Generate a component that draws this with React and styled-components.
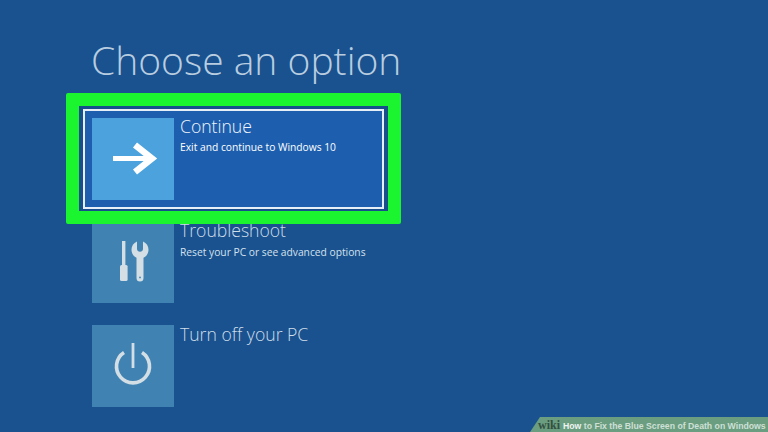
import React from "react";
import styled, { createGlobalStyle } from "styled-components";

const GlobalStyle = createGlobalStyle`
  html, body {
    margin: 0;
    padding: 0;
    width: 768px;
    height: 432px;
    overflow: hidden;
    background: #19528f;
  }
`;

const Page = styled.div`
  position: relative;
  box-sizing: border-box;
  width: 768px;
  height: 432px;
  padding: 35px 0 0 92px;
  overflow: hidden;
  background: #19528f;
  font-family: "Open Sans", "Liberation Sans", sans-serif;
`;

const Title = styled.h1`
  margin: 0 0 0 -1px;
  height: 83px;
  font-size: 39px;
  line-height: 50px;
  font-weight: 300;
  color: #b9cde0;
`;

const Options = styled.div`
  display: flex;
  flex-direction: column;
  gap: 22px;
`;

const Row = styled.div`
  display: flex;
  gap: 6px;
  height: 82px;
`;

const Frame = styled.div`
  position: relative;
  box-sizing: border-box;
  align-self: flex-start;
  width: 335px;
  height: 131px;
  margin: -25px 0 -25px -26px;
  padding: 2.5px 4px;
  border: 13.5px solid #1af52f;
  border-radius: 2px;
  background: #164f8c;
`;

const Outline = styled.div`
  box-sizing: border-box;
  height: 100px;
  padding: 7px;
  border: 2px solid #e6eff7;
  background: #1d5fae;
`;

const Tile = styled.div`
  display: flex;
  align-items: center;
  justify-content: center;
  flex: none;
  width: 82px;
  height: 82px;
  background: ${({ $active }) => ($active ? "#4ba2dc" : "#4083b3")};
`;

const Label = styled.div`
  font-size: 17.6px;
  line-height: 22px;
  font-weight: 300;
  margin-top: ${({ $active }) => ($active ? "-3px" : "-2px")};
  color: ${({ $active }) => ($active ? "#f0f5fa" : "#cfdde9")};
`;

const Hint = styled.div`
  margin-top: ${({ $active }) => ($active ? "3px" : "4px")};
  font-size: 10.25px;
  line-height: 14px;
  color: ${({ $active }) => ($active ? "#ffffff" : "#d5e1ec")};
`;

const Badge = styled.div`
  position: absolute;
  right: 0;
  bottom: 0;
  box-sizing: border-box;
  width: 238px;
  height: 15px;
  padding-left: 8px;
  background: #6b9d80;
  clip-path: polygon(10px 0, 100% 0, 100% 100%, 0 100%);
  font-family: "Liberation Sans", Arial, sans-serif;
  font-size: 8.7px;
  line-height: 16px;
  font-weight: 700;
  white-space: nowrap;
  color: #cfe0d6;
  b {
    color: #33503f;
    font-family: "Liberation Serif", serif;
    font-size: 12px;
    margin-right: 3px;
  }
  strong {
    color: #eef5f0;
  }
`;

const ArrowIcon = () => (
  <svg width="82" height="82" viewBox="0 0 82 82">
    <path d="M21 40.500h35" fill="none" stroke="#fff" strokeWidth="5" />
    <path d="M43 27l17 13.500L43 54" fill="none" stroke="#fff" strokeWidth="6.500" />
  </svg>
);

const ToolsIcon = () => (
  <svg width="82" height="82" viewBox="0 0 82 82" fill="#d3dee5">
    <rect x="30" y="20" width="3.400" height="25" />
    <rect x="28" y="44" width="7.600" height="16" rx="1.500" />
    <path d="M45 20.500c-3.600 1.500-5.500 4.600-5.500 8.300 0 3.600 2 6.400 5 7.900V57a3.400 3.400 0 0 0 7 0V36.700c3-1.500 5-4.300 5-7.900 0-3.700-1.900-6.800-5.500-8.300v7.500c0 1.500-1.300 2.700-3 2.700s-3-1.200-3-2.700z" />
    <circle cx="48" cy="56.400" r="0.900" fill="#4083b3" />
  </svg>
);

const PowerIcon = () => (
  <svg width="82" height="82" viewBox="0 0 82 82" fill="none" stroke="#d3dee5" strokeWidth="3.600">
    <path d="M41 18v25" strokeWidth="2.800" />
    <path d="M32 27.500a16.500 16.500 0 1 0 18 0" />
  </svg>
);

const App = () => (
  <Page>
    <GlobalStyle />
    <Title>Choose an option</Title>
    <Options>
      <Frame>
        <Outline>
          <Row>
            <Tile $active>
              <ArrowIcon />
            </Tile>
            <div>
              <Label $active>Continue</Label>
              <Hint $active>Exit and continue to Windows 10</Hint>
            </div>
          </Row>
        </Outline>
      </Frame>
      <Row>
        <Tile>
          <ToolsIcon />
        </Tile>
        <div>
          <Label>Troubleshoot</Label>
          <Hint>Reset your PC or see advanced options</Hint>
        </div>
      </Row>
      <Row>
        <Tile>
          <PowerIcon />
        </Tile>
        <div>
          <Label>Turn off your PC</Label>
        </div>
      </Row>
    </Options>
    <Badge>
      <b>wiki</b>
      <strong>How</strong> to Fix the Blue Screen of Death on Windows
    </Badge>
  </Page>
);

export default App;
